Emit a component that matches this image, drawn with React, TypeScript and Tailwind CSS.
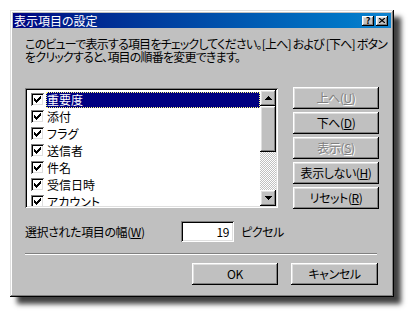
import type { ReactNode } from 'react';

const FONT = "font-['Noto_Sans_CJK_JP','Noto_Sans',sans-serif] [font-feature-settings:'palt']";

const RAISED =
  'shadow-[inset_-1px_-1px_#000,inset_1px_1px_#fff,inset_-2px_-2px_#808080,inset_2px_2px_#dfdfdf]';
const SUNKEN =
  'shadow-[inset_1px_1px_#808080,inset_-1px_-1px_#fff,inset_2px_2px_#000,inset_-2px_-2px_#dfdfdf]';

const ITEMS = ['重要度', '添付', 'フラグ', '送信者', '件名', '受信日時', 'アカウント'];

function Key({ k }: { k: string }) {
  return (
    <>
      (<span className="underline underline-offset-1">{k}</span>)
    </>
  );
}

function Btn({ children, disabled, w = 'w-[86px]' }: { children: ReactNode; disabled?: boolean; w?: string }) {
  return (
    <div
      className={`${w} h-[22px] flex items-center justify-center bg-[#c0c0c0] text-[12px] leading-none tracking-[-0.4px] ${RAISED} ${
        disabled ? 'text-[#808080] [text-shadow:1px_1px_#fff]' : 'text-black'
      }`}
    >
      {children}
    </div>
  );
}

function Check() {
  return (
    <div className="w-[13px] h-[13px] shrink-0 bg-white shadow-[inset_1px_1px_#808080,inset_-1px_-1px_#fff,inset_2px_2px_#000,inset_-2px_-2px_#dfdfdf] flex items-center justify-center">
      <svg width="7" height="7" viewBox="0 0 7 7">
        <path d="M0 2h1v1h1v1h1V3h1V2h1V1h1V0h1v3H6v1H5v1H4v1H3v1H2V6H1V5H0z" fill="#000" />
      </svg>
    </div>
  );
}

function Arrow({ up }: { up?: boolean }) {
  return (
    <svg width="7" height="4" viewBox="0 0 7 4">
      <path d={up ? 'M3 0h1v1h1v1h1v1h1v1H0V3h1V2h1V1h1z' : 'M0 0h7v1H6v1H5v1H4v1H3V3H2V2H1V1H0z'} fill="#000" />
    </svg>
  );
}

function TitleBtn({ children }: { children: ReactNode }) {
  return (
    <div className={`w-[12px] h-[10px] bg-[#c0c0c0] flex items-center justify-center ${RAISED}`}>{children}</div>
  );
}

export default function App() {
  return (
    <div className={`w-[408px] h-[312px] bg-white pt-[10px] pl-[10px] ${FONT}`}>
      <div
        className={`w-[384px] h-[287px] bg-[#c0c0c0] p-[3px] flex flex-col shadow-[inset_-1px_-1px_#000,inset_1px_1px_#dfdfdf,inset_-2px_-2px_#808080,inset_2px_2px_#fff,7px_7px_5px_rgba(0,0,0,0.75)]`}
      >
        {/* title bar */}
        <div className="h-[15px] flex items-center bg-gradient-to-r from-[#000080] to-[#1084d0] pl-[1px] pr-[3px]">
          <span className="text-white text-[12px] leading-none">表示項目の設定</span>
          <div className="ml-auto flex gap-[2px]">
            <TitleBtn>
              <span className="text-[9px] font-bold leading-none text-black">?</span>
            </TitleBtn>
            <TitleBtn>
              <svg width="6" height="5" viewBox="0 0 6 5">
                <path d="M0 0l6 5M6 0L0 5" stroke="#000" strokeWidth="1.2" />
              </svg>
            </TitleBtn>
          </div>
        </div>

        <div className="flex flex-col pl-[12px] pr-[12px] text-[12px] text-black">
          <p className="mt-[9px] leading-[13px] tracking-[-0.8px] whitespace-nowrap">
            このビューで表示する項目をチェックしてください。[上へ] および [下へ] ボタン
            <br />
            をクリックすると、項目の順番を変更できます。
          </p>

          <div className="mt-[25px] flex gap-[15px]">
            {/* list */}
            <div className={`w-[253px] h-[120px] bg-white p-[2px] flex ${SUNKEN}`}>
              <div className="flex-1 flex flex-col pt-[1px] overflow-hidden">
                {ITEMS.map((it, i) => (
                  <div key={it} className="h-[17px] shrink-0 flex items-center pl-[4px]">
                    <Check />
                    <span
                      className={`ml-[2px] h-[16px] flex-1 flex items-center pl-[1px] leading-none ${
                        i === 0
                          ? 'bg-[#000080] text-white outline outline-1 outline-dotted outline-[#ffff80] -outline-offset-1'
                          : ''
                      }`}
                    >
                      {it}
                    </span>
                  </div>
                ))}
              </div>
              {/* scrollbar */}
              <div className="w-[16px] flex flex-col">
                <div className={`h-[16px] bg-[#c0c0c0] flex items-center justify-center ${RAISED}`}>
                  <Arrow up />
                </div>
                <div className={`h-[46px] bg-[#c0c0c0] ${RAISED}`} />
                <div className="flex-1 bg-[repeating-conic-gradient(#c0c0c0_0_25%,#fff_0_50%)] bg-[length:2px_2px]" />
                <div className={`h-[16px] bg-[#c0c0c0] flex items-center justify-center ${RAISED}`}>
                  <Arrow />
                </div>
              </div>
            </div>

            {/* buttons */}
            <div className="flex flex-col gap-[3px] -mt-[1px]">
              <Btn disabled>
                上へ<Key k="U" />
              </Btn>
              <Btn>
                下へ<Key k="D" />
              </Btn>
              <Btn disabled>
                表示<Key k="S" />
              </Btn>
              <Btn>
                表示しない<Key k="H" />
              </Btn>
              <Btn>
                リセット<Key k="R" />
              </Btn>
            </div>
          </div>

          <div className="mt-[12px] flex items-center h-[21px] tracking-[-0.4px]">
            <span className="w-[156px]">
              選択された項目の幅<Key k="W" />
            </span>
            <div className={`w-[53px] h-[21px] bg-white flex items-center justify-end pr-[5px] ${SUNKEN}`}>19</div>
            <span className="ml-[7px]">ピクセル</span>
          </div>

          <div className="mt-[11px] h-[2px] w-[352px] border-t border-[#808080] border-b border-b-white" />

          <div className="mt-[8px] flex justify-end gap-[13px] pr-[1px]">
            <Btn w="w-[86px]">OK</Btn>
            <Btn w="w-[87px]">キャンセル</Btn>
          </div>
        </div>
      </div>
    </div>
  );
}
